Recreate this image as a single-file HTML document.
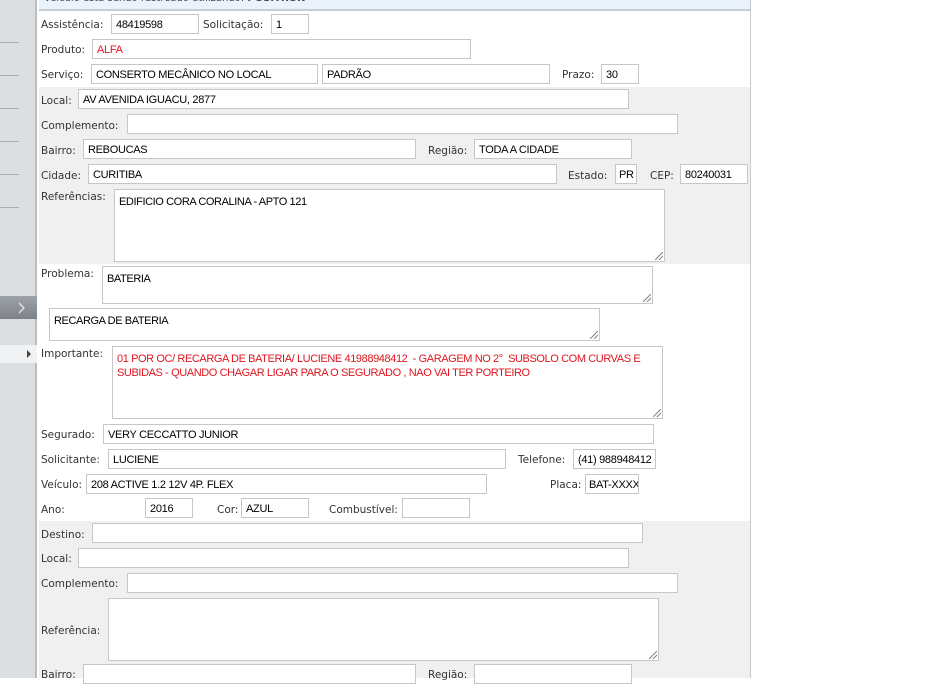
<!DOCTYPE html>
<html><head><meta charset="utf-8"><style>
*{margin:0;padding:0;box-sizing:border-box}
body{width:948px;height:678px;overflow:hidden;background:#fff;position:relative;font-family:"DejaVu Sans",Verdana,sans-serif;font-size:10.5px;color:#333}
#side{position:absolute;left:0;top:0;width:37px;height:678px;background:#dcdfe2;border-right:2px solid #b9bec3}
.sl{position:absolute;left:0;width:19px;height:1px;background:#a9aeb3}
#main{position:absolute;left:39px;top:0;width:712px;height:678px;background:#fff;border-right:1px solid #c8c8c8}
.g{position:absolute;left:39px;width:711px;background:#f0f0f0}
.l{position:absolute;white-space:nowrap;line-height:14px;color:#333}
.i{position:absolute;background:#fff;border:1px solid #c6c6c6;height:20px;font-family:"Liberation Sans",Arial,sans-serif;font-size:11px;letter-spacing:-0.3px;color:#000;padding:4px 0 0 4px;white-space:nowrap;overflow:hidden}
.t{position:absolute;background:#fff;border:1px solid #c6c6c6;font-family:"Liberation Sans",Arial,sans-serif;font-size:11px;letter-spacing:-0.4px;color:#000;padding:5px 0 0 4px;line-height:14px}
.r{color:#e0141e}
.grip{position:absolute;right:1px;bottom:1px;width:8px;height:8px;background:linear-gradient(135deg,transparent 45%,#888 45%,#888 55%,transparent 55%,transparent 70%,#888 70%,#888 80%,transparent 80%)}
</style></head><body>
<div id="side">
<div class="sl" style="top:42px"></div><div class="sl" style="top:75px"></div><div class="sl" style="top:108px"></div><div class="sl" style="top:141px"></div><div class="sl" style="top:174px"></div><div class="sl" style="top:207px"></div>
<div style="position:absolute;left:0;top:296px;width:37px;height:23px;background:linear-gradient(#9ea3a8,#7d8287)"><svg width="37" height="23" style="position:absolute;left:0;top:0"><path d="M19 7 L24 12 L19 17" stroke="#e4e6e8" stroke-width="1.3" fill="none"/></svg></div>
<div style="position:absolute;left:0;top:345px;width:37px;height:18px;background:#f1f2f3"></div>
<div style="position:absolute;left:27px;top:350px;width:0;height:0;border-left:4px solid #444;border-top:4px solid transparent;border-bottom:4px solid transparent"></div>
</div>
<div id="main"></div>
<div style="position:absolute;left:39px;top:0;width:711px;height:11px;background:#eaf2fb;border-bottom:2px solid #c9ced3;overflow:hidden"><span style="position:absolute;left:5px;top:-7px;font-size:10px;color:#444">Veículo está sendo rastreado utilizando: <b>POSITRON</b></span></div>
<div class="g" style="top:87px;height:177px"></div>
<div class="g" style="top:521px;height:157px"></div>

<div class="l" style="left:41px;top:18px">Assistência:</div><div class="i" style="left:111px;top:14px;width:88px">48419598</div>
<div class="l" style="left:203px;top:18px">Solicitação:</div><div class="i" style="left:271px;top:14px;width:38px">1</div>
<div class="l" style="left:41px;top:43px">Produto:</div><div class="i r" style="left:92px;top:39px;width:379px;color:#e0141e">ALFA</div>
<div class="l" style="left:41px;top:68px">Serviço:</div><div class="i" style="left:91px;top:64px;width:227px">CONSERTO MECÂNICO NO LOCAL</div>
<div class="i" style="left:322px;top:64px;width:228px">PADRÃO</div>
<div class="l" style="left:562px;top:68px">Prazo:</div><div class="i" style="left:601px;top:64px;width:38px">30</div>

<div class="l" style="left:41px;top:94px">Local:</div><div class="i" style="left:78px;top:89px;width:551px">AV AVENIDA IGUACU, 2877</div>
<div class="l" style="left:41px;top:119px">Complemento:</div><div class="i" style="left:127px;top:114px;width:551px"></div>
<div class="l" style="left:41px;top:144px">Bairro:</div><div class="i" style="left:83px;top:139px;width:333px">REBOUCAS</div>
<div class="l" style="left:428px;top:144px">Região:</div><div class="i" style="left:474px;top:139px;width:158px">TODA A CIDADE</div>
<div class="l" style="left:41px;top:169px">Cidade:</div><div class="i" style="left:88px;top:164px;width:469px">CURITIBA</div>
<div class="l" style="left:568px;top:169px">Estado:</div><div class="i" style="left:615px;top:164px;width:22px;padding-left:3px">PR</div>
<div class="l" style="left:650px;top:169px">CEP:</div><div class="i" style="left:680px;top:164px;width:68px">80240031</div>
<div class="l" style="left:41px;top:190px">Referências:</div><div class="t" style="left:114px;top:189px;width:551px;height:73px">EDIFICIO CORA CORALINA - APTO 121<div class="grip"></div></div>

<div class="l" style="left:41px;top:267px">Problema:</div><div class="t" style="left:102px;top:266px;width:551px;height:38px">BATERIA<div class="grip"></div></div>
<div class="t" style="left:49px;top:308px;width:551px;height:33px">RECARGA DE BATERIA<div class="grip"></div></div>
<div class="l" style="left:41px;top:347px">Importante:</div><div class="t" style="left:112px;top:346px;width:551px;height:73px;color:#e0141e">01 POR OC/ RECARGA DE BATERIA/ LUCIENE 41988948412&nbsp; - GARAGEM NO 2°&nbsp; SUBSOLO COM CURVAS E SUBIDAS - QUANDO CHAGAR LIGAR PARA O SEGURADO , NAO VAI TER PORTEIRO<div class="grip"></div></div>

<div class="l" style="left:41px;top:428px">Segurado:</div><div class="i" style="left:103px;top:424px;width:551px">VERY CECCATTO JUNIOR</div>
<div class="l" style="left:41px;top:453px">Solicitante:</div><div class="i" style="left:108px;top:449px;width:398px">LUCIENE</div>
<div class="l" style="left:518px;top:453px">Telefone:</div><div class="i" style="left:573px;top:449px;width:83px">(41) 988948412</div>
<div class="l" style="left:41px;top:478px">Veículo:</div><div class="i" style="left:86px;top:474px;width:401px">208 ACTIVE 1.2 12V 4P. FLEX</div>
<div class="l" style="left:550px;top:478px">Placa:</div><div class="i" style="left:585px;top:474px;width:54px;padding-left:3px">BAT-XXXX</div>
<div class="l" style="left:41px;top:503px">Ano:</div><div class="i" style="left:145px;top:498px;width:48px">2016</div>
<div class="l" style="left:217px;top:503px">Cor:</div><div class="i" style="left:241px;top:498px;width:68px">AZUL</div>
<div class="l" style="left:329px;top:503px">Combustível:</div><div class="i" style="left:402px;top:498px;width:68px"></div>

<div class="l" style="left:41px;top:528px">Destino:</div><div class="i" style="left:92px;top:523px;width:551px"></div>
<div class="l" style="left:41px;top:552px">Local:</div><div class="i" style="left:78px;top:548px;width:551px"></div>
<div class="l" style="left:41px;top:577px">Complemento:</div><div class="i" style="left:127px;top:573px;width:551px"></div>
<div class="l" style="left:41px;top:624px">Referência:</div><div class="t" style="left:108px;top:598px;width:551px;height:63px"><div class="grip"></div></div>
<div class="l" style="left:41px;top:668px">Bairro:</div><div class="i" style="left:83px;top:664px;width:333px"></div>
<div class="l" style="left:428px;top:668px">Região:</div><div class="i" style="left:474px;top:664px;width:158px"></div>
</body></html>
